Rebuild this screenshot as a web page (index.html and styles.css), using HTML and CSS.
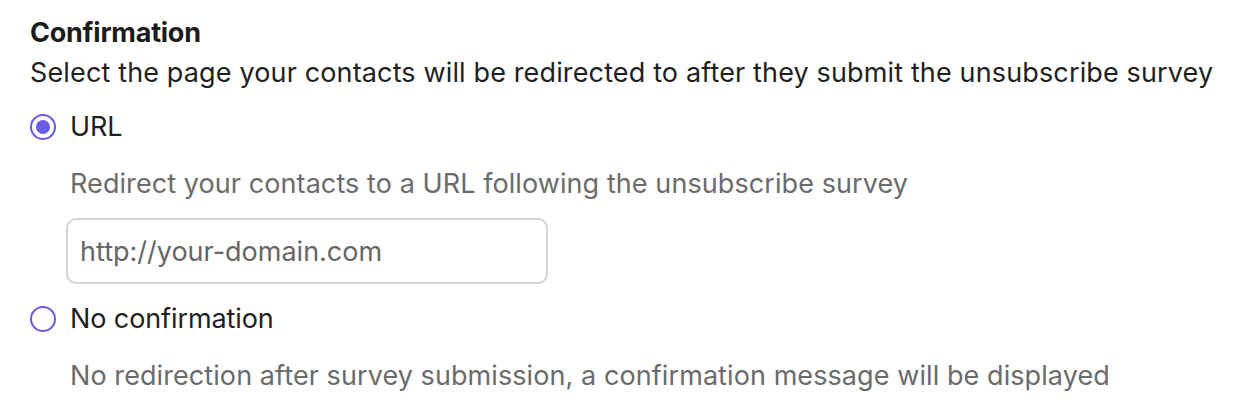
FILE: index.html
```html
<!DOCTYPE html>
<html>
<head>
<meta charset="utf-8">
<link rel="stylesheet" href="styles.css">
</head>
<body>
<section class="field">
  <h2 class="title">Confirmation</h2>
  <p class="lead">Select the page your contacts will be redirected to after they submit the unsubscribe survey</p>
  <div class="options">
    <div class="option">
      <label class="choice"><span class="radio checked"></span><span class="label">URL</span></label>
      <div class="detail">
        <p class="hint">Redirect your contacts to a URL following the unsubscribe survey</p>
        <div class="input">http://your-domain.com</div>
      </div>
    </div>
    <div class="option">
      <label class="choice"><span class="radio"></span><span class="label">No confirmation</span></label>
      <div class="detail">
        <p class="hint">No redirection after survey submission, a confirmation message will be displayed</p>
      </div>
    </div>
  </div>
</section>
</body>
</html>
```
FILE: styles.css
```css
* { box-sizing: border-box; }
html, body { margin: 0; background: #fff; }
body {
  font-family: Inter, "Noto Sans", sans-serif;
  font-size: 27px;
  color: #1f1f1f;
}
.field { padding: 15px 30px 0 30px; }
.title { margin: 0; font-size: 27px; font-weight: 700; line-height: 36px; color: #1c1c1c; letter-spacing: -0.25px; }
.lead { margin: 4px 0 0; line-height: 36px; letter-spacing: 0.14px; }
.options { display: flex; flex-direction: column; margin-top: 16px; }
.choice { display: flex; align-items: center; gap: 14px; height: 40px; }
.radio {
  width: 26px; height: 26px; border-radius: 50%;
  border: 2.5px solid #6a5de2; display: flex; align-items: center; justify-content: center;
  flex: none;
}
.radio.checked::after {
  content: ""; width: 14px; height: 14px; border-radius: 50%; background: #6a5de2;
}
.label { line-height: 36px; letter-spacing: -0.1px; }
.detail { padding-left: 40px; display: flex; flex-direction: column; gap: 16px; margin-top: 19px; }
.hint { margin: 0; color: #6b6b6b; line-height: 36px; letter-spacing: 0.08px; }
.input {
  width: 482px; height: 66px; margin-left: -4px; border: 2px solid #d4d4d4; border-radius: 10px;
  padding: 0 12px; display: flex; align-items: center; color: #666;
}
.option + .option { margin-top: 15px; }
```
